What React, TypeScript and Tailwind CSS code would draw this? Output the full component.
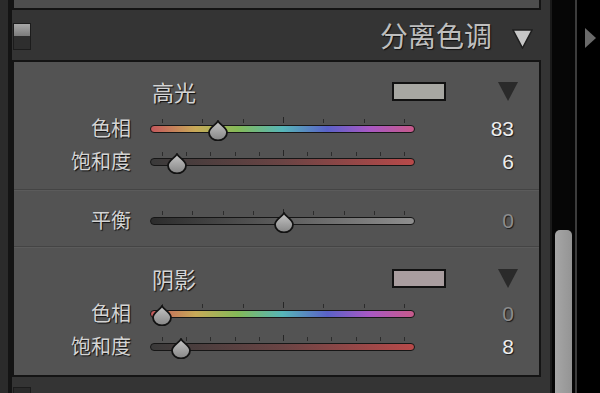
import React from 'react';

const HUE =
  'bg-[linear-gradient(to_right,#c4585c,#c8aa58_17%,#84ba58_33%,#56b6b8_50%,#5a62c8_67%,#a858c4_83%,#c65a8a)]';
const SAT = 'bg-[linear-gradient(to_right,#3a3a3a,#6a4444_50%,#b84a4a)]';
const BAL = 'bg-[linear-gradient(to_right,#2c2c2c,#8e8e8e)]';

type Row = {
  label: string;
  ticks: number;
  frac: number;
  track: string;
  value: string;
  dim?: boolean;
};

const highlights: Row[] = [
  { label: '色相', ticks: 7, frac: 83 / 360, track: HUE, value: '83' },
  { label: '饱和度', ticks: 11, frac: 0.06, track: SAT, value: '6' },
];
const balance: Row = { label: '平衡', ticks: 9, frac: 0.5, track: BAL, value: '0', dim: true };
const shadows: Row[] = [
  { label: '色相', ticks: 7, frac: 0, track: HUE, value: '0', dim: true },
  { label: '饱和度', ticks: 11, frac: 0.08, track: SAT, value: '8' },
];

function Thumb({ left }: { left: number }) {
  return (
    <svg width="22" height="21" viewBox="0 0 22 21" className="absolute top-[7px]" style={{ left }}>
      <defs>
        <linearGradient id="thumbFill" x1="0" y1="0" x2="0" y2="1">
          <stop offset="0" stopColor="#c6c6c6" />
          <stop offset="1" stopColor="#858585" />
        </linearGradient>
      </defs>
      <path
        d="M11 1 C12.5 4.5 20 7.5 20 12.5 A9 8 0 0 1 2 12.5 C2 7.5 9.5 4.5 11 1 Z"
        fill="url(#thumbFill)"
        stroke="#121212"
        strokeWidth="1.8"
      />
    </svg>
  );
}

function Slider({ row }: { row: Row }) {
  return (
    <div className="flex h-[33px] items-center">
      <div className="-mt-[3px] w-[117px] text-right text-[20px] leading-none text-[#d4d4d4] [text-shadow:1px_1px_1px_rgba(0,0,0,0.85)]">
        {row.label}
      </div>
      <div className="relative ml-[19px] flex h-full w-[265px] flex-col pt-[5px]">
        <div className="ml-[12px] mr-[10px] flex h-[5px] items-end justify-between">
          {Array.from({ length: row.ticks }).map((_, i) => (
            <div
              key={i}
              className={
                i === (row.ticks - 1) / 2 ? 'h-[6px] w-px bg-[#262626]' : 'h-[4px] w-px bg-[#2c2c2c]'
              }
            />
          ))}
        </div>
        <div className={`mt-[2px] h-[8px] rounded-full border-[1.5px] border-[#161616] ${row.track}`} />
        <Thumb left={12 + row.frac * 243 - 11} />
      </div>
      <div
        className={`-mt-[3px] w-[99px] text-right font-['Liberation_Sans',sans-serif] text-[21px] leading-none [text-shadow:1px_1px_1px_rgba(0,0,0,0.7)] ${
          row.dim ? 'text-[#8c8c8c]' : 'text-[#ededed]'
        }`}
      >
        {row.value}
      </div>
    </div>
  );
}

function Heading({ title, swatch }: { title: string; swatch: string }) {
  return (
    <div className="flex h-[30px] items-center pl-[138px]">
      <div className="w-[240px] text-[22px] leading-none text-[#d4d4d4] [text-shadow:1px_1px_1px_rgba(0,0,0,0.85)]">
        {title}
      </div>
      <div className={`h-[19px] w-[54px] border-2 border-[#111] ${swatch}`} />
      <svg width="20" height="19" viewBox="0 0 20 19" className="ml-[52px]">
        <polygon points="0,0 20,0 10,19" fill="#2a2a2a" />
      </svg>
    </div>
  );
}

function Separator() {
  return (
    <div className="flex flex-col">
      <div className="h-px bg-[#444]" />
      <div className="h-px bg-[#5b5b5b]" />
    </div>
  );
}

function Switch() {
  return (
    <div className="flex h-[27px] w-[18px] flex-col border border-[#1c1c1c]">
      <div className="h-[12px] bg-[linear-gradient(to_bottom,#a8a8a8,#7c7c7c)]" />
      <div className="flex-1 bg-[#2e2e2e]" />
    </div>
  );
}

export default function App() {
  return (
    <div className="flex h-[393px] w-[600px] overflow-hidden bg-black font-['Noto_Sans_CJK_SC','Noto_Sans',sans-serif]">
      <div className="flex w-[550px] flex-col">
        <div className="h-[2px] bg-[#bdbdbd]" />
        <div className="flex flex-1">
          <div className="w-[8px] bg-[#2b2b2b]" />
          <div className="w-[4px] bg-[#141414]" />
          <div className="flex w-[538px] flex-col bg-[#343434]">
            <div className="h-[10px] w-[529px] border-x-2 border-b-2 border-[#141414] bg-[#4e4e4e]" />

            <div className="flex h-[50px] items-start pr-[17px]">
              <div className="ml-px mt-[13px]">
                <Switch />
              </div>
              <div className="ml-auto mt-[11px] text-[28px] leading-none text-[#bebebe] [text-shadow:1px_1px_1px_rgba(0,0,0,0.7)]">
                分离色调
              </div>
              <svg width="21" height="20" viewBox="0 0 21 20" className="ml-[20px] mt-[19px]">
                <polygon points="1,1 20,1 10.5,19" fill="#c6c6c6" stroke="#1e1e1e" strokeWidth="1.5" />
              </svg>
            </div>

            <div className="flex h-[317px] w-[529px] flex-col border-2 border-[#141414] bg-[#535353]">
              <div className="mt-[14px]">
                <Heading title="高光" swatch="bg-[#a7a7a2]" />
              </div>
              <div className="mt-[7px]">
                {highlights.map((r) => (
                  <Slider key={r.label} row={r} />
                ))}
              </div>
              <div className="mt-[10px]">
                <Separator />
              </div>
              <div className="mt-[14px]">
                <Slider row={balance} />
              </div>
              <div className="mt-[8px]">
                <Separator />
              </div>
              <div className="mt-[15px]">
                <Heading title="阴影" swatch="bg-[#a99d9f]" />
              </div>
              <div className="mt-[5px]">
                {shadows.map((r) => (
                  <Slider key={r.label} row={r} />
                ))}
              </div>
            </div>

            <div className="flex-1 pl-px pt-[10px]">
              <div className="h-[10px] w-[18px] border border-[#1c1c1c] bg-[#2a2a2a]" />
            </div>
          </div>
        </div>
      </div>

      <div className="flex w-[50px]">
        <div className="w-[2px] bg-[#1a1a1a]" />
        <div className="w-[23px] bg-[#060606] pl-[3px] pt-[230px]">
          <div className="h-full w-[17px] rounded-t-[5px] bg-[linear-gradient(to_right,#a6a6a6,#949494)]" />
        </div>
        <div className="w-[2px] bg-[#3c3c3c]" />
        <div className="w-[23px] bg-black pl-[8px] pt-[28px]">
          <svg width="11" height="20" viewBox="0 0 11 20">
            <polygon points="0,0 11,10 0,20" fill="#6a6a6a" />
          </svg>
        </div>
      </div>
    </div>
  );
}
